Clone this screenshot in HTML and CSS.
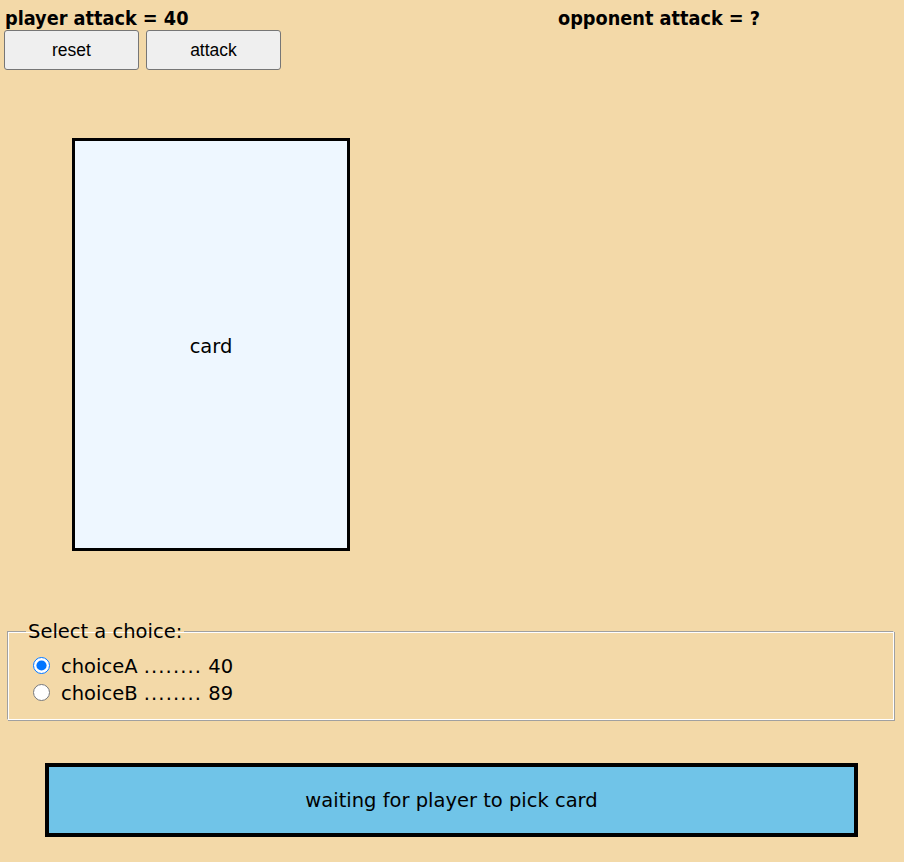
FILE: index.html
```html
<!DOCTYPE html>
<html>
<head>
<meta charset="utf-8">
<link rel="stylesheet" href="styles.css">
</head>
<body>
<div class="header">
  <div class="player">
    <div class="stat">player attack = 40</div>
    <div class="buttons">
      <button class="btn">reset</button>
      <button class="btn">attack</button>
    </div>
  </div>
  <div class="opponent">
    <div class="stat">opponent attack = ?</div>
  </div>
</div>
<div class="board">
  <div class="card">card</div>
</div>
<fieldset class="choices">
  <legend>Select a choice:</legend>
  <label class="choice"><input type="radio" name="choice" checked><span>choiceA <span class="dots">........</span> 40</span></label>
  <label class="choice"><input type="radio" name="choice"><span>choiceB <span class="dots">........</span> 89</span></label>
</fieldset>
<div class="status">waiting for player to pick card</div>
</body>
</html>
```
FILE: styles.css
```css
html, body {
  margin: 0;
  padding: 0;
}
body {
  background: #f3d9a8;
  font-family: "DejaVu Sans", sans-serif;
  font-size: 19.5px;
  color: #000;
  padding-top: 8px;
}
.header {
  display: flex;
}
.player {
  width: 553px;
  padding-left: 4px;
}
.stat {
  font-family: "DejaVu Sans Condensed", "DejaVu Sans", sans-serif;
  font-weight: bold;
  font-size: 19.7px;
  line-height: 21px;
  padding-left: 1px;
}
.buttons {
  display: flex;
  gap: 7px;
  margin-top: 1px;
}
.btn {
  width: 135px;
  height: 40px;
  font-family: "Liberation Sans", Arial, sans-serif;
  font-size: 17.5px;
  background: #efefef;
  border: 1px solid #767676;
  border-radius: 3px;
  color: #000;
  padding: 0;
}
.board {
  padding: 68px 0 0 72px;
}
.card {
  width: 272px;
  height: 403px;
  padding-top: 4px;
  border: 3px solid #000;
  background: #eef7ff;
  display: flex;
  align-items: center;
  justify-content: center;
}
.choices {
  margin: 69px 10px 0 7px;
  padding: 10px 14px 12px 18px;
  border: 1px solid;
  border-color: #a0a0a0 #fff #fff #a0a0a0;
  box-shadow: inset 1px 1px 0 #fff, 1px 1px 0 #a0a0a0;
}
.choices legend {
  padding: 0 2px;
  margin: 0;
  line-height: 23px;
}
.choice {
  display: flex;
  align-items: center;
  height: 27px;
  gap: 11px;
  padding-left: 7px;
  line-height: 23px;
}
.choice input {
  margin: 0 0 3px 0;
  width: 17px;
  height: 17px;
}
.dots {
  letter-spacing: 1.1px;
}
.status {
  margin: 43px 46px 0 45px;
  height: 66px;
  border: 4px solid #000;
  background: #70c4e8;
  display: flex;
  align-items: center;
  justify-content: center;
}
```
